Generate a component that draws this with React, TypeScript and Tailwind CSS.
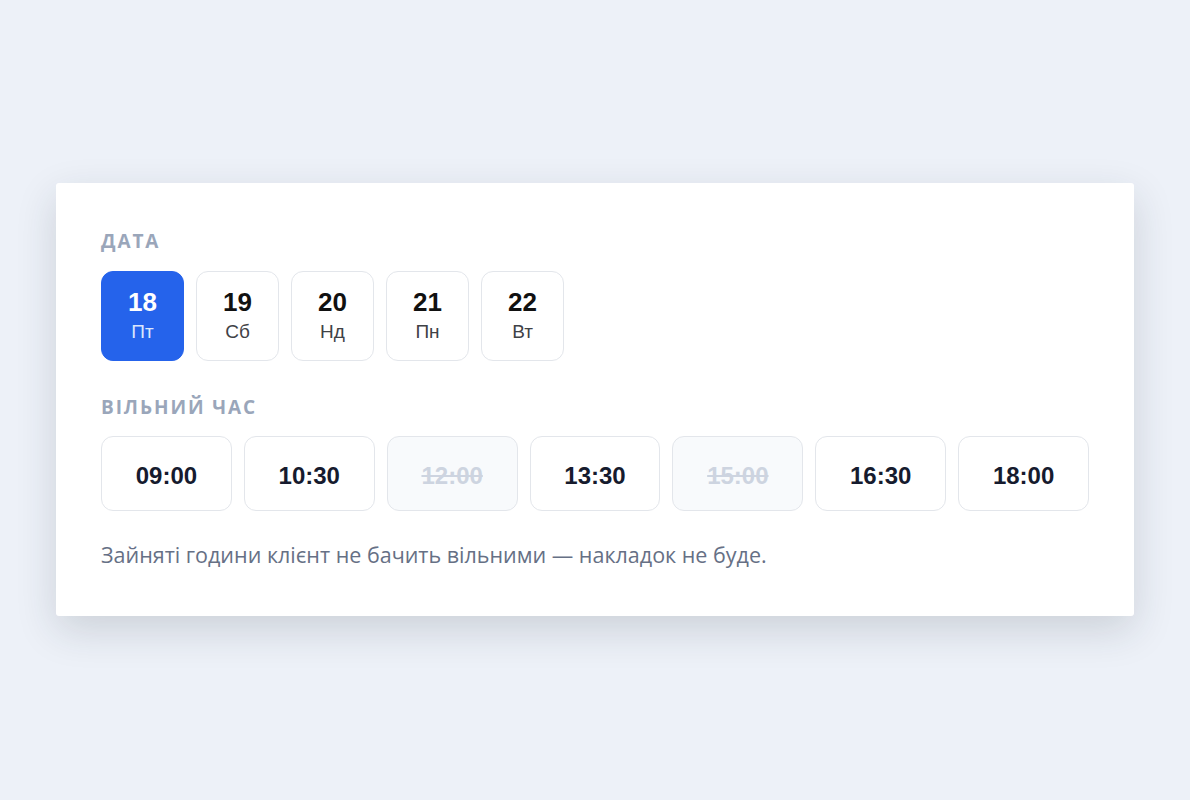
const dates = [
  { num: '18', day: 'Пт', active: true },
  { num: '19', day: 'Сб' },
  { num: '20', day: 'Нд' },
  { num: '21', day: 'Пн' },
  { num: '22', day: 'Вт' },
];

const slots = [
  { time: '09:00' },
  { time: '10:30' },
  { time: '12:00', busy: true },
  { time: '13:30' },
  { time: '15:00', busy: true },
  { time: '16:30' },
  { time: '18:00' },
];

const Label = ({ children }: { children: React.ReactNode }) => (
  <div className="font-['Open_Sans',sans-serif] text-[19px] leading-6 font-bold tracking-[0.1em] text-[#9aa6ba] uppercase">
    {children}
  </div>
);

export default function App() {
  return (
    <div className="flex min-h-[800px] w-full items-start justify-center bg-[#edf1f8] pt-[183px]">
      <div className="w-[1078px] rounded-[3px] bg-white px-[45px] pt-[46px] pb-[46px] shadow-[0_14px_40px_rgba(30,41,59,0.16)]">
        <Label>Дата</Label>
        <div className="mt-[18px] flex gap-3">
          {dates.map((d) => (
            <div
              key={d.num}
              className={`flex h-[90px] w-[83px] flex-col items-center justify-center rounded-xl border-[1.5px] font-['Liberation_Sans',Arial,sans-serif] ${
                d.active ? 'border-[#2563eb] bg-[#2563eb]' : 'border-[#e3e6eb] bg-white'
              }`}
            >
              <span
                className={`text-[26px] leading-[30px] font-bold ${
                  d.active ? 'text-white' : 'text-[#111111]'
                }`}
              >
                {d.num}
              </span>
              <span
                className={`mt-0.5 text-[19px] leading-[26px] ${
                  d.active ? 'text-[#dbe6fd]' : 'text-[#3f4246]'
                }`}
              >
                {d.day}
              </span>
            </div>
          ))}
        </div>

        <div className="mt-[34px]">
          <Label>Вільний час</Label>
        </div>
        <div className="mt-[17px] grid grid-cols-7 gap-3">
          {slots.map((s) => (
            <div
              key={s.time}
              className={`flex h-[75px] items-center justify-center rounded-xl border-[1.5px] border-[#e3e6eb] pt-1 font-['Liberation_Sans',Arial,sans-serif] text-[24px] font-bold ${
                s.busy ? 'bg-[#f8fafc] text-[#cdd4e0] line-through' : 'bg-white text-[#161b2e]'
              }`}
            >
              {s.time}
            </div>
          ))}
        </div>

        <p className="mt-[29px] font-['Open_Sans',sans-serif] text-[21.5px] leading-[30px] text-[#667085]">
          Зайняті години клієнт не бачить вільними — накладок не буде.
        </p>
      </div>
    </div>
  );
}
